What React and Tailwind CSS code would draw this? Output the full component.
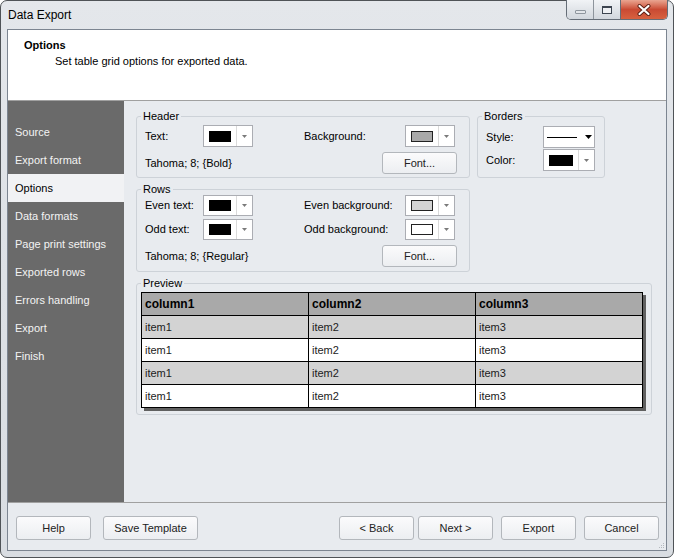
import React from "react";

function Arrow({ dark }) {
  return (
    <svg width="7" height="4" viewBox="0 0 7 4" className="block">
      <path d="M0 0H7L3.5 4Z" fill={dark ? "#000" : "#7a7a7a"} />
    </svg>
  );
}

function ColorPicker({ swatch, h = "h-[22px]" }) {
  return (
    <div className={`flex ${h} w-[50px] items-center border border-[#abadb3] bg-white`}>
      <div className={`ml-[5px] h-[11px] w-[22px] border border-[#222] ${swatch}`} />
      <div className="ml-[5px] h-full w-px bg-[#dadada]" />
      <div className="flex flex-1 items-center justify-center">
        <svg width="5" height="3" viewBox="0 0 5 3" className="block">
          <path d="M0 0H5L2.5 3Z" fill="#7a7a7a" />
        </svg>
      </div>
    </div>
  );
}

function Btn({ children, w = "w-[75px]", h = "h-[24px]", extra = "" }) {
  return (
    <button
      className={`${w} ${h} ${extra} rounded-[3px] border border-[#b3b7bc] bg-linear-to-b from-[#fbfbfc] to-[#eceef1] text-[11px] leading-none text-[#222]`}
    >
      {children}
    </button>
  );
}

function Legend({ children }) {
  return (
    <legend className="ml-[4px] px-[2px] text-[11px] leading-[12px] text-black">{children}</legend>
  );
}

const navItems = [
  "Source",
  "Export format",
  "Options",
  "Data formats",
  "Page print settings",
  "Exported rows",
  "Errors handling",
  "Export",
  "Finish",
];

const rows = [
  { bg: "bg-[#d3d3d3]" },
  { bg: "bg-white" },
  { bg: "bg-[#d3d3d3]" },
  { bg: "bg-white", last: true },
];

export default function App() {
  return (
    <div className="h-[558px] w-[674px] bg-white font-['Liberation_Sans',Arial,sans-serif] text-[11px] text-black">
      <div className="flex h-[558px] w-[674px] flex-col rounded-[7px] border border-[#4f5357] bg-linear-to-b from-[#e4e7eb] via-[#dde1e6] to-[#d9dde2] px-[6px] pb-[6px]">
        {/* Title bar */}
        <div className="flex h-[28px] items-start">
          <div className="ml-px pt-[7px] text-[12px] leading-[14px] text-black">Data Export</div>
          <div className="-mr-px -mt-px ml-auto flex h-[20px] overflow-hidden rounded-b-[5px] border border-t-0 border-[#656d77]">
            <div className="flex w-[27px] items-center justify-center border-r border-[#8d949c] bg-linear-to-b from-[#f1f3f6] to-[#d2d7dd]">
              <div className="mt-[5px] h-[4px] w-[11px] rounded-[1px] border border-[#8f969e] bg-[#e3e6ea]" />
            </div>
            <div className="flex w-[27px] items-center justify-center border-r border-[#656d77] bg-linear-to-b from-[#f1f3f6] to-[#d2d7dd]">
              <div className="h-[8px] w-[10px] border border-t-2 border-[#3d4550] bg-[#eef0f3]" />
            </div>
            <div className="flex w-[46px] items-center justify-center bg-linear-to-b from-[#e9a591] via-[#c94a33] to-[#d7613f]">
              <svg width="14" height="12" viewBox="0 0 14 12" className="block">
                <path d="M2.5 2L11.5 10M11.5 2L2.5 10" stroke="#5a1d12" strokeWidth="4" strokeLinecap="round" />
                <path d="M2.5 2L11.5 10M11.5 2L2.5 10" stroke="#ffffff" strokeWidth="2.2" strokeLinecap="round" />
              </svg>
            </div>
          </div>
        </div>

        {/* Client area */}
        <div className="flex flex-1 flex-col border border-[#7c8591] bg-[#e8ebef]">
          {/* Header */}
          <div className="h-[71px] border-b border-[#a0a0a0] bg-white pl-[16px] pt-[8px]">
            <div className="text-[11px] font-bold leading-[14px]">Options</div>
            <div className="ml-[31px] mt-[2px] text-[11px] leading-[14px]">Set table grid options for exported data.</div>
          </div>

          {/* Body */}
          <div className="flex h-[401px]">
            <div className="w-[116px] bg-[#6a6a6a] pt-[17px]">
              {navItems.map((item) => (
                <div
                  key={item}
                  className={`flex h-[28px] items-center pl-[7px] text-[11px] ${
                    item === "Options" ? "bg-[#f1f2f4] text-black" : "text-[#f3f3f3]"
                  }`}
                >
                  {item}
                </div>
              ))}
            </div>

            <div className="flex-1 pl-[12px] pt-[9px]">
              <div className="flex items-start">
                <div className="flex flex-col">
                  {/* Header group */}
                  <fieldset className="h-[68px] w-[334px] rounded-[3px] border border-[#cdd2d8]">
                    <Legend>Header</Legend>
                    <div className="pl-[8px] pr-[12px]">
                      <div className="mt-[3px] flex h-[22px] items-center">
                        <div className="w-[58px]">Text:</div>
                        <ColorPicker swatch="bg-black border-black" />
                        <div className="ml-[51px] w-[101px]">Background:</div>
                        <ColorPicker swatch="bg-[#a9a9a9]" />
                      </div>
                      <div className="mt-[5px] flex h-[22px] items-center">
                        <div>Tahoma; 8; {"{Bold}"}</div>
                        <Btn h="h-[22px]" extra="ml-auto">Font...</Btn>
                      </div>
                    </div>
                  </fieldset>

                  {/* Rows group */}
                  <fieldset className="mt-[5px] h-[89px] w-[334px] rounded-[3px] border border-[#cdd2d8]">
                    <Legend>Rows</Legend>
                    <div className="pl-[8px] pr-[12px]">
                      <div className="flex h-[21px] items-center">
                        <div className="w-[58px]">Even text:</div>
                        <ColorPicker h="h-[21px]" swatch="bg-black border-black" />
                        <div className="ml-[51px] w-[101px]">Even background:</div>
                        <ColorPicker h="h-[21px]" swatch="bg-[#d3d3d3]" />
                      </div>
                      <div className="mt-[3px] flex h-[21px] items-center">
                        <div className="w-[58px]">Odd text:</div>
                        <ColorPicker h="h-[21px]" swatch="bg-black border-black" />
                        <div className="ml-[51px] w-[101px]">Odd background:</div>
                        <ColorPicker h="h-[21px]" swatch="bg-white" />
                      </div>
                      <div className="mt-[5px] flex h-[22px] items-center">
                        <div>Tahoma; 8; {"{Regular}"}</div>
                        <Btn h="h-[22px]" extra="ml-auto">Font...</Btn>
                      </div>
                    </div>
                  </fieldset>
                </div>

                {/* Borders group */}
                <fieldset className="ml-[7px] h-[68px] w-[128px] rounded-[3px] border border-[#cdd2d8]">
                  <Legend>Borders</Legend>
                  <div className="pl-[8px]">
                    <div className="mt-[4px] flex h-[22px] items-center">
                      <div className="w-[57px]">Style:</div>
                      <div className="flex h-[22px] w-[52px] items-center border border-[#abadb3] bg-white">
                        <div className="ml-[3px] h-px w-[30px] bg-black" />
                        <div className="ml-[8px]">
                          <Arrow dark />
                        </div>
                      </div>
                    </div>
                    <div className="mt-px flex h-[22px] items-center">
                      <div className="w-[57px]">Color:</div>
                      <div className="flex h-[22px] w-[52px] items-center border border-[#abadb3] bg-white">
                        <div className="ml-[5px] h-[11px] w-[24px] border border-black bg-black" />
                        <div className="ml-[5px] h-full w-px bg-[#dadada]" />
                        <div className="flex flex-1 items-center justify-center">
                          <svg width="5" height="3" viewBox="0 0 5 3" className="block">
                            <path d="M0 0H5L2.5 3Z" fill="#7a7a7a" />
                          </svg>
                        </div>
                      </div>
                    </div>
                  </div>
                </fieldset>
              </div>

              {/* Preview */}
              <fieldset className="mt-[5px] h-[138px] w-[516px] rounded-[3px] border border-[#cdd2d8]">
                <Legend>Preview</Legend>
                <div className="pl-[4px] pt-[3px]">
                  <div className="w-[502px] border border-black shadow-[3px_3px_0_#606060]">
                    <div className="flex h-[23px] border-b border-black bg-[#a9a9a9] text-[12px] font-bold">
                      <div className="flex w-[167px] items-center border-r border-black pl-[3px]">column1</div>
                      <div className="flex w-[167px] items-center border-r border-black pl-[3px]">column2</div>
                      <div className="flex flex-1 items-center pl-[3px]">column3</div>
                    </div>
                    {rows.map((r, i) => (
                      <div
                        key={i}
                        className={`flex ${r.last ? "h-[22px]" : "h-[23px] border-b border-black"} ${r.bg} text-[11px] text-[#1c1c1c]`}
                      >
                        <div className="flex w-[167px] items-center border-r border-black pl-[3px]">item1</div>
                        <div className="flex w-[167px] items-center border-r border-black pl-[3px]">item2</div>
                        <div className="flex flex-1 items-center pl-[3px]">item3</div>
                      </div>
                    ))}
                  </div>
                </div>
              </fieldset>
            </div>
          </div>

          {/* Bottom bar */}
          <div className="relative flex flex-1 border-t border-[#a0a0a0] pl-[8px] pr-[7px] pt-[13px]">
            <Btn>Help</Btn>
            <Btn w="w-[95px]" extra="ml-[12px]">Save Template</Btn>
            <Btn extra="ml-auto">&lt; Back</Btn>
            <Btn extra="ml-[4px]">Next &gt;</Btn>
            <Btn extra="ml-[8px]">Export</Btn>
            <Btn extra="ml-[8px]">Cancel</Btn>
            <svg width="7" height="7" viewBox="0 0 7 7" className="absolute bottom-px right-px block">
              <rect x="5" y="1" width="1" height="1" fill="#b5b9be" />
              <rect x="3" y="3" width="1" height="1" fill="#b5b9be" />
              <rect x="5" y="3" width="1" height="1" fill="#b5b9be" />
              <rect x="1" y="5" width="1" height="1" fill="#b5b9be" />
              <rect x="3" y="5" width="1" height="1" fill="#b5b9be" />
              <rect x="5" y="5" width="1" height="1" fill="#b5b9be" />
            </svg>
          </div>
        </div>
      </div>
    </div>
  );
}
